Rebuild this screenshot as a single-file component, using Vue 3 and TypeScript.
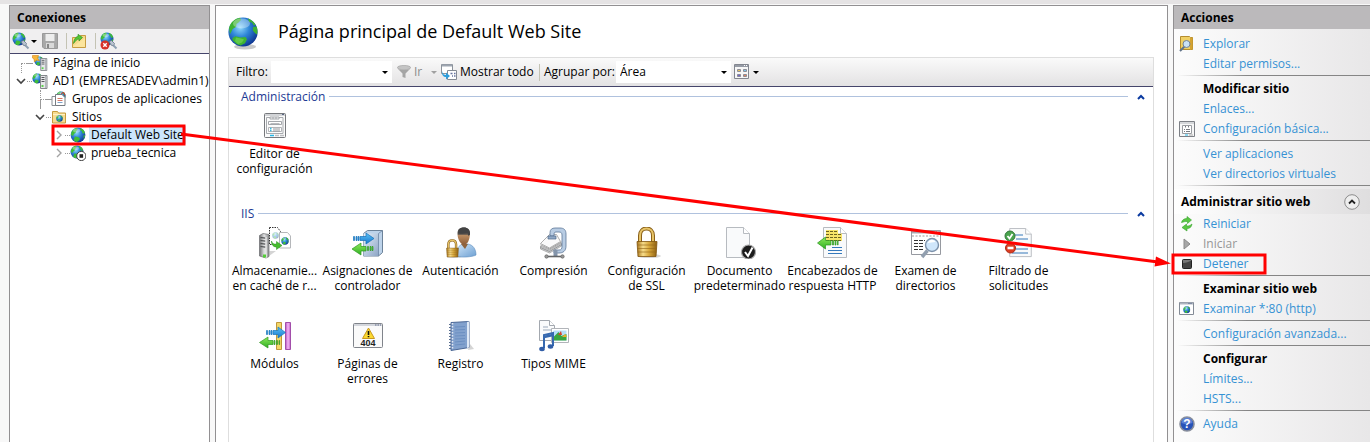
<script setup lang="ts">
import { ref } from 'vue'

interface TreeNode { label: string; icon: string; depth: number; state: 'none' | 'open' | 'closed'; selected?: boolean; cls?: string }
interface Feature { icon: string; lines: string[] }
interface Group { title: string; items: Feature[] }
interface Action { label: string; icon?: string; kind?: 'heading' | 'disabled' }

const tree: TreeNode[] = [
  { label: 'Página de inicio', icon: 'home', depth: 0, state: 'none', cls: 'first' },
  { label: 'AD1 (EMPRESADEV\\admin1)', icon: 'server', depth: 0, state: 'open' },
  { label: 'Grupos de aplicaciones', icon: 'pools', depth: 1, state: 'none', cls: 'child' },
  { label: 'Sitios', icon: 'sites', depth: 1, state: 'open' },
  { label: 'Default Web Site', icon: 'globe', depth: 2, state: 'closed', selected: true },
  { label: 'prueba_tecnica', icon: 'globe-stopped', depth: 2, state: 'closed' },
]

const groups: Group[] = [
  { title: 'Administración', items: [{ icon: 'editor', lines: ['Editor de', 'configuración'] }] },
  {
    title: 'IIS',
    items: [
      { icon: 'cache', lines: ['Almacenamie...', 'en caché de r...'] },
      { icon: 'handlers', lines: ['Asignaciones de', 'controlador'] },
      { icon: 'auth', lines: ['Autenticación'] },
      { icon: 'compress', lines: ['Compresión'] },
      { icon: 'lock', lines: ['Configuración', 'de SSL'] },
      { icon: 'default-doc', lines: ['Documento', 'predeterminado'] },
      { icon: 'headers', lines: ['Encabezados de', 'respuesta HTTP'] },
      { icon: 'browse', lines: ['Examen de', 'directorios'] },
      { icon: 'filtering', lines: ['Filtrado de', 'solicitudes'] },
      { icon: 'modules', lines: ['Módulos'] },
      { icon: 'errors', lines: ['Páginas de', 'errores'] },
      { icon: 'log', lines: ['Registro'] },
      { icon: 'mime', lines: ['Tipos MIME'] },
    ],
  },
]

const siteActions: Action[][] = [
  [{ label: 'Explorar', icon: 'explore' }, { label: 'Editar permisos...' }],
  [{ label: 'Modificar sitio', kind: 'heading' }, { label: 'Enlaces...' }, { label: 'Configuración básica...', icon: 'settings' }],
  [{ label: 'Ver aplicaciones' }, { label: 'Ver directorios virtuales' }],
]

const manageActions: Action[][] = [
  [{ label: 'Reiniciar', icon: 'restart' }, { label: 'Iniciar', icon: 'play', kind: 'disabled' }, { label: 'Detener', icon: 'stop' }],
  [{ label: 'Examinar sitio web', kind: 'heading' }, { label: 'Examinar *:80 (http)', icon: 'web' }],
  [{ label: 'Configuración avanzada...' }],
  [{ label: 'Configurar', kind: 'heading' }, { label: 'Límites...' }, { label: 'HSTS...' }],
  [{ label: 'Ayuda', icon: 'help' }],
]

const filter = ref('')
const groupBy = ref('Área')
</script>

<template>
  <svg class="defs" aria-hidden="true">
    <defs>
      <radialGradient id="gSea" cx=".4" cy=".35" r=".7"><stop offset="0" stop-color="#8fd8fb" /><stop offset=".45" stop-color="#2f86d8" /><stop offset="1" stop-color="#0b2f8c" /></radialGradient>
      <linearGradient id="gGold" x1="0" x2="1" y1="0" y2="0"><stop offset="0" stop-color="#a8741a" /><stop offset=".3" stop-color="#f6dc8a" /><stop offset=".6" stop-color="#d9a93c" /><stop offset="1" stop-color="#8d5f12" /></linearGradient>
      <linearGradient id="gBlue" x1="0" x2="0" y1="0" y2="1"><stop offset="0" stop-color="#5cc3f5" /><stop offset="1" stop-color="#1676cf" /></linearGradient>
      <linearGradient id="gGreen" x1="0" x2="0" y1="0" y2="1"><stop offset="0" stop-color="#8eea5c" /><stop offset="1" stop-color="#2fae22" /></linearGradient>
      <linearGradient id="gSteel" x1="0" x2="1" y1="0" y2="1"><stop offset="0" stop-color="#e6f0fa" /><stop offset="1" stop-color="#8ca4c4" /></linearGradient>
      <linearGradient id="gGray" x1="0" x2="1" y1="0" y2="0"><stop offset="0" stop-color="#6f7072" /><stop offset=".5" stop-color="#e2e3e4" /><stop offset="1" stop-color="#8b8c8e" /></linearGradient>
      <linearGradient id="gPink" x1="0" x2="1" y1="0" y2="0"><stop offset="0" stop-color="#b452bd" /><stop offset=".5" stop-color="#f3b4f5" /><stop offset="1" stop-color="#c264ca" /></linearGradient>
      <linearGradient id="gShirt" x1="0" x2="1" y1="0" y2="1"><stop offset="0" stop-color="#d3e8fa" /><stop offset="1" stop-color="#6c9fd2" /></linearGradient>
      <linearGradient id="gHair" x1="0" x2="0" y1="0" y2="1"><stop offset="0" stop-color="#403f3f" /><stop offset=".4" stop-color="#5b554f" /><stop offset=".45" stop-color="#bd8e62" /><stop offset="1" stop-color="#8c5c36" /></linearGradient>
    </defs>

    <symbol id="globe" viewBox="0 0 16 16">
      <circle cx="8" cy="8" r="7.4" fill="url(#gSea)" />
      <path d="M1.2 6C2 3 4.4 1 7 .9l.7 1.6-1.5 1.4-.3 1.7-2 1.5-.8 1.8L1 8zM10.4 1.2c2 .6 3.6 2 4.4 4l-.6 1.6-1.8-.5-.5-2.2-1.7-.8zM5 9.6l3 .5 2 1.5-1 2-2.2 1.5c-1.5-.3-2.5-1-3.3-1.8zM13.5 8.500l1.6-.2c-.1 1.4-.7 2.600-1.5 3.600z" fill="#3fbd38" />
      <ellipse cx="6.6" cy="3.6" rx="3.6" ry="2" fill="#fff" opacity=".35" />
    </symbol>
    <symbol id="big-globe" viewBox="0 0 32 33">
      <ellipse cx="17" cy="29.700" rx="11" ry="2.800" fill="#777" opacity=".4" />
      <circle cx="15" cy="15" r="14.600" fill="url(#gSea)" />
      <path d="M1 11C2.600 5 7 1.500 12 .7l1 2.200-3 3-1.500.8-.3 3-3.600 2.400-1.700 3.400L2 17zM20 1.500c3 1 6 3.500 7.600 6l-1.800 1.200-1.600-3-3.200-1zM25 10l3.600-.6c1.200 3 1 6 .3 8l-2-1.500-2-2.500zM4.500 21l3-1.800 5 1.300 5-.5 1.500 2.200-2 4-4.400 2.300C9 28 6.500 25.500 4.500 23z" fill="#3eb332" />
      <path d="M8 20.500l5 1 3 1-2 3-4 1.500-3-3z" fill="#7bd95a" opacity=".6" />
      <ellipse cx="13.500" cy="6.500" rx="8.500" ry="5" fill="#fff" opacity=".33" />
    </symbol>
    <symbol id="globe-stopped" viewBox="0 0 16 16">
      <use href="#globe" width="14" height="14" />
      <circle cx="11.300" cy="11" r="4.600" fill="#fff" stroke="#444" />
      <rect x="9.500" y="9.200" width="3.600" height="3.600" fill="#222" />
    </symbol>
    <symbol id="tower" viewBox="0 0 8 14">
      <path d="M.5.500h6.500v13H.5z" fill="#e7e8ea" stroke="#85888c" /><path d="M5 1h1.800v12H5z" fill="#b3b6ba" />
      <path d="M1.500 2.500h3M1.500 4.500h3M1.500 6.500h3" stroke="#56595d" /><path d="M1.500 10h2v2h-2z" fill="#5fd150" />
    </symbol>
    <symbol id="server" viewBox="0 0 16 16"><use href="#globe" x="0" y="0" width="11" height="11" /><use href="#tower" x="8" y="2" width="8" height="14" /></symbol>
    <symbol id="home" viewBox="0 0 16 16">
      <use href="#globe" x="2" y="1" width="10" height="10" /><use href="#tower" x="8" y="3" width="8" height="13" />
      <path d="M.5.500h6l-1 2.500 2 3-3-1-2 2L2 4 .5 3z" fill="#f8b53c" stroke="#d88718" stroke-width=".6" />
    </symbol>
    <symbol id="pools" viewBox="0 0 16 16">
      <use href="#globe" x="5" y="0" width="10" height="10" />
      <path d="M1 5.500h7v9H1z" fill="#fff" stroke="#8a8f95" /><path d="M4.500 3.500h6.500l3 3v8H4.500z" fill="#fff" stroke="#777c82" />
      <path d="M6.500 7.500h5M6.500 9.500h5" stroke="#d67764" /><path d="M6.500 11.500h5" stroke="#7ea2c8" /><path d="M10 2.500l3-1 1 3" fill="none" stroke="#d13c30" />
    </symbol>
    <symbol id="sites" viewBox="0 0 16 16"><path d="M1.500 2.500h5l1 1.500h7v10h-13z" fill="#f6dc91" stroke="#c79b3c" /><path d="M2 5.500h12" stroke="#fff2c4" /><use href="#globe" x="5" y="6" width="7" height="7" /></symbol>
    <symbol id="plug-globe" viewBox="0 0 18 18"><use href="#globe" width="14" height="14" /><path d="M9 9.500l2.500-1 3 3-1 2.500-2.500-1z" fill="#b9c3cf" stroke="#64758a" stroke-width=".8" /><path d="M13.500 13.500L16.500 16.500" stroke="#8fa0b2" stroke-width="2" /></symbol>
    <symbol id="disconnect" viewBox="0 0 18 18"><use href="#plug-globe" width="18" height="18" /><circle cx="5" cy="13" r="4.500" fill="#d6312a" /><path d="M3.300 11.300l3.400 3.400M6.700 11.300l-3.400 3.400" stroke="#fff" stroke-width="1.400" /></symbol>
    <symbol id="save" viewBox="0 0 16 16"><path d="M.5.500h15v15H2l-1.500-1.500z" fill="#a8a8a8" stroke="#9a9a9a" /><path d="M3.500 1h9v7h-9z" fill="#ededed" /><path d="M4 10h8v5H4z" fill="#d9d9d9" /><path d="M5 11h2v4H5z" fill="#888" /></symbol>
    <symbol id="up-folder" viewBox="0 0 16 16"><path d="M1.500 4.500h7l1-2h5v12h-13z" fill="#f4d987" stroke="#c69c42" /><path d="M2 13L14 5v9H2z" fill="#ffe9a6" opacity=".7" /><path d="M2.500 10.500C3 6 5 3.500 7 3.500V1.300L11.500 4.500 8 8V6C6 6 4.500 8 2.500 10.500z" fill="#54c536" stroke="#2c8c1c" stroke-width=".6" /></symbol>

    <symbol id="funnel" viewBox="0 0 14 14"><ellipse cx="7" cy="2.600" rx="6.600" ry="2.200" fill="#c4c4c4" stroke="#999" stroke-width=".6" /><path d="M.5 3.500C3 5.500 11 5.500 13.500 3.500L8.500 8.500v4.500L5.500 12V8.500z" fill="#a5a5a5" /></symbol>
    <symbol id="show-all" viewBox="0 0 16 16"><path d="M.5.500h11v9H.5z" fill="#fff" stroke="#8b929b" /><path d="M1 1.500h10" stroke="#9ea6b1" stroke-width="2" /><path d="M6.500 6.500h9v9h-9z" fill="#fff" stroke="#858b94" /><path d="M9.500 9.500h2M13 9.500h1.500M11 12h1M13 12h1.500" stroke="#6875a0" stroke-width="1.300" /><path d="M1 7c.5 3 2 4 4 4V8.500l4 3.500-4 3.500V13C2.500 13 .5 11 1 7z" fill="#2d9ddb" /></symbol>
    <symbol id="views" viewBox="0 0 16 16"><path d="M.5.500h14v14H.5z" fill="#f7f7f7" stroke="#82868f" /><path d="M1 2h13" stroke="#969ba5" stroke-width="2" /><path d="M10 1.500h3" stroke="#fff" stroke-dasharray="1 1" /><g stroke="#8c8c96"><path d="M3.500 5.500h3v2h-3z" fill="#e8c45a" /><path d="M9.500 5.500h3v2h-3z" fill="#79c2e8" /><path d="M3.500 10.500h3v2h-3z" fill="#7265ca" /><path d="M9.500 10.500h3v2h-3z" fill="#df8660" /></g></symbol>

    <symbol id="editor" viewBox="0 0 32 32">
      <rect x="5.500" y="3.500" width="21" height="24" rx="1" fill="#fbfbfb" stroke="#77797d" /><path d="M6 5h20" stroke="#d2d4d7" stroke-width="2" /><path d="M23 4.500h2" stroke="#5a6785" />
      <path d="M7.500 7.500h5M20 7.500h4v16H7.500v-16" fill="none" stroke="#a7aaae" /><path d="M11 7h9v2h-9zM14 7v2M17 7v2" fill="#fff" stroke="#a4a7ab" />
      <path d="M9.500 11.500h13v3h-13z" fill="#fff" stroke="#a4a7ab" /><path d="M11.500 13.500h9" stroke="#b9bbbe" /><path d="M9.500 17.500h13v4h-13z" fill="#fff" stroke="#b3b5b8" />
      <path d="M11 18.500h1.500M11 20.500h1.500" stroke="#35b8e0" stroke-width="1.400" /><path d="M14 19h7M14 21h7" stroke="#94979b" /><path d="M11 25.500h4" stroke="#25b7e6" stroke-width="1.500" /><path d="M16 25.500h4M21 25.500h4" stroke="#bcbec1" stroke-width="1.500" />
    </symbol>
    <symbol id="cache" viewBox="0 0 32 32">
      <path d="M.5 8.500L4 6.500l6 1v22L7 31l-6.500-2z" fill="url(#gGray)" stroke="#6b6d70" stroke-width=".7" /><path d="M1.500 10.500l5 .7M1.500 13.500l5 .7M1.500 16.500l5 .7M1.500 19.500l5 .7" stroke="#4d4f52" stroke-width="1.200" /><path d="M7 10v21" stroke="#fafafa" /><path d="M4 27.500h3v3H4z" fill="#53cf37" /><path d="M10 24h7l-7 5z" fill="#aaa" opacity=".5" />
      <path d="M10.500.500h8l3 4v13h-11z" fill="#fff" stroke="#333" stroke-dasharray="1.500 1" /><use href="#globe" x="13" y="5" width="7" height="7" opacity=".4" />
      <path d="M20.500 5.500h8l3 3.500v12h-11z" fill="#fff" stroke="#b5b7ba" /><use href="#globe" x="22" y="10" width="8" height="8" />
      <path d="M12.500 14c1 3 2.500 3.200 5 3v-2.500l5.500 4-5.500 4v-2.500c-3 0-5-2-5-6z" fill="#47bd2e" stroke="#238a18" stroke-width=".5" />
    </symbol>
    <symbol id="handlers" viewBox="0 0 32 32">
      <path d="M11.500 6.500l4-3h15v22l-4 3.500h-15z" fill="#bdd3ea" stroke="#6c8299" /><path d="M11.500 6.500h15V29h-15z" fill="url(#gSteel)" /><path d="M26.500 6.500l4-3M26.500 6.500V29" stroke="#6d87a4" stroke-width=".8" />
      <path d="M8 9.500h6V6l8 5.500L14 17v-3.500H8zM1.500 9.500h1v4h-1zM4 9.500h1v4H4zM6 9.500h1v4H6z" fill="url(#gBlue)" stroke="#1570b7" stroke-width=".7" />
      <path d="M14 19.500H9V16l-9 6 9 6v-4h5zM15.500 19.500h1v4h-1zM18 19.500h1v4h-1zM20 19.500h1v4h-1z" fill="url(#gGreen)" stroke="#2d991f" stroke-width=".7" />
    </symbol>
    <symbol id="lock" viewBox="0 0 32 32">
      <ellipse cx="18" cy="29" rx="12" ry="2" fill="#777" opacity=".3" /><path d="M9 15V8.500C9 4 12 1.500 15.500 1.500S22 4 22 8.500V15" fill="none" stroke="#8a611a" stroke-width="4" /><path d="M9 15V8.500C9 4 12 1.500 15.500 1.500S22 4 22 8.500V15" fill="none" stroke="#e7c468" stroke-width="2" />
      <path d="M6 14.500h20l-1 15H7z" fill="url(#gGold)" stroke="#80540f" stroke-width=".8" /><path d="M6.500 18h19M6.500 21.500h19M6.500 25h19" stroke="#946818" stroke-width=".9" opacity=".7" />
    </symbol>
    <symbol id="auth" viewBox="0 0 32 32">
      <path d="M11 29c0-7 3-11 7-12h5c5 1 8 5 8 11-3 2-17 3-20 1z" fill="url(#gShirt)" stroke="#5d8dbe" stroke-width=".6" /><path d="M16 17l4 5 3-5z" fill="#8f643e" /><path d="M12.500 6.500C12.500 2 15 .5 19 .5s6.500 2.500 6 7c-.5 5-2 10-6 10-3.500 0-6.500-5-6.500-11z" fill="url(#gHair)" /><path d="M13 6C14 2 16 .5 19 .5s6 2 6 7l-1.500 1.500-1-3c-3 .8-7 .8-8.500.5z" fill="#434343" />
      <use href="#lock" x="-2" y="12" width="19" height="20" />
    </symbol>
    <symbol id="compress" viewBox="0 0 32 32">
      <path d="M2.500 19l9 4 12-7v3l-12 7-9-4z" fill="#d5d7d9" stroke="#888" stroke-width=".6" /><path d="M2.500 16.500l9-9h7l4 7-11 6.500z" fill="#fafafa" stroke="#9a9a9a" stroke-width=".8" /><path d="M2.500 17.800l9 4.200 12-7M2.500 20.500l9 4 12-7" fill="none" stroke="#777" stroke-width=".7" />
      <path d="M12 9V5.500C12 2.500 14 1 17 1h5c4 0 6 2 6 6v12c0 5-3 7-7 7h-5v-3h5c2.500 0 3-1.500 3-4V8c0-2-1-3-3-3h-3c-2 0-2 1-2 4z" fill="#b8cce3" stroke="#5d7798" stroke-width=".8" /><path d="M10 9h8v3h-8z" fill="#91a9c6" stroke="#4f678a" stroke-width=".7" /><path d="M15.500 23h4v6h-4z" fill="#8495ab" /><path d="M9 29.500h15" stroke="#626467" stroke-width="1.600" /><circle cx="8.500" cy="29.500" r="1.700" fill="#999" stroke="#555" stroke-width=".6" /><circle cx="24.500" cy="29.500" r="1.700" fill="#999" stroke="#555" stroke-width=".6" />
    </symbol>
    <symbol id="page" viewBox="0 0 24 32"><path d="M.5.500h17l6 6v24H.5z" fill="#f9fafb" stroke="#b7bbc0" /><path d="M17.500.500v6h6" fill="#fff" stroke="#b7bbc0" /></symbol>
    <symbol id="default-doc" viewBox="0 0 32 32"><use href="#page" x="2" y="0" width="24" height="32" /><circle cx="24.500" cy="25" r="7" fill="#1c1c1c" stroke="#aaa" stroke-width="1.200" /><path d="M21 25l3 4 4.500-8.500" fill="none" stroke="#fff" stroke-width="2" /></symbol>
    <symbol id="headers" viewBox="0 0 32 32">
      <use href="#page" x="6" y="0" width="24" height="32" /><path d="M9 3h12v3.500h4V14H9z" fill="#f8e468" /><path d="M9 4.500h11M9 7.500h16M9 10.500h16M9 13.500h16" stroke="#6d621f" stroke-dasharray="3 1" /><path d="M15 20.500h10M11 23.500h14M11 26.500h14" stroke="#3579bc" />
      <path d="M14 13.500H8.500V10L.5 16l8 6v-4H14zM15.500 13.500h1v4.500h-1zM18 13.500h1V18h-1zM20.500 13.500h.6V18h-.6z" fill="url(#gGreen)" stroke="#2b981f" stroke-width=".7" />
    </symbol>
    <symbol id="browse" viewBox="0 0 32 32">
      <path d="M1.500 3.500h29v24h-29z" fill="#fff" stroke="#9699a0" /><path d="M2 5h28" stroke="#a8abb2" stroke-width="3" /><path d="M22 5h7" stroke="#fff" stroke-dasharray="1.500 1" /><path d="M2 9h28" stroke="#999" stroke-dasharray="2 1.500" />
      <path d="M4 13.500h11M4 16.500h9M4 19.500h9M4 22.500h10" stroke="#333" stroke-dasharray="4 1" /><path d="M17.500 23.500L12 30" stroke="#929faf" stroke-width="3.500" /><circle cx="22" cy="18" r="6.500" fill="#cfe6fb" stroke="#7c91aa" stroke-width="1.400" /><path d="M17.500 16c2-4 6-4.500 8-1-3 0-5 1-8 1z" fill="#fff" />
    </symbol>
    <symbol id="filtering" viewBox="0 0 32 32">
      <use href="#page" x="6" y="1" width="23" height="30" /><path d="M12 8h8M13 12h12M13 18h12M13 22h12M9 26h16" stroke="#3779ba" stroke-width="1.200" /><circle cx="7" cy="9" r="5" fill="#4aa44e" stroke="#32783a" /><path d="M4.500 9l2 2.500L9.500 7" fill="none" stroke="#fff" stroke-width="1.800" /><circle cx="7.500" cy="21" r="5" fill="#dc3c20" stroke="#aa2816" /><path d="M4.500 21h6" stroke="#fff" stroke-width="2.600" />
    </symbol>
    <symbol id="modules" viewBox="0 0 32 32">
      <path d="M17.500 2.500h5v27h-5z" fill="#f3d768" stroke="#c0973a" /><path d="M26.500 2.500h5v27h-5z" fill="url(#gPink)" stroke="#a24eaa" />
      <path d="M14 10.500h5V7l7.500 5.500L19 18v-3.500h-5zM7.500 10.500h1v4h-1zM10 10.500h1v4h-1zM12 10.500h1v4h-1z" fill="url(#gBlue)" stroke="#1a76bc" stroke-width=".7" /><path d="M14 20.500H9V17l-8.500 5.500L9 28v-3.500h5zM15 20.500h1v4h-1zM17.500 20.500h1v4h-1zM20 20.500h.6v4H20z" fill="url(#gGreen)" stroke="#309a24" stroke-width=".7" />
    </symbol>
    <symbol id="errors" viewBox="0 0 32 32">
      <rect x="1.500" y="3.500" width="29" height="24" rx="1" fill="#fafafa" stroke="#80848b" /><path d="M2 5h28" stroke="#d3d6dc" stroke-width="2" /><path d="M23 5h6" stroke="#616d8d" stroke-dasharray="1.500 1" /><path d="M16.500 8l6 10.500h-12z" fill="#fbd92f" stroke="#c9971c" stroke-linejoin="round" /><path d="M16.500 11v4M16.500 16v1.300" stroke="#111" stroke-width="1.600" />
    </symbol>
    <symbol id="log" viewBox="0 0 32 32">
      <path d="M25 24l4 5-6 1z" fill="#aaa" opacity=".5" /><path d="M6 2.500l18-1v26l-18 3z" fill="#82a1cd" stroke="#4b6795" /><path d="M22 2v26l2-.5v-26z" fill="#dfe9f6" /><path d="M10 7l10-.5M10 10l10-.5M10 13l10-.5M10 16l10-.5M10 19l10-.5M10 22l10-1M10 25l10-1" stroke="#6286bb" stroke-width=".7" /><path d="M7.500 3v27" stroke="#e5eaf3" stroke-width="1.500" stroke-dasharray="1.500 1.500" /><path d="M5 4v26" stroke="#596f91" stroke-width="2" stroke-dasharray="1 2" />
    </symbol>
    <symbol id="mime" viewBox="0 0 32 32">
      <path d="M1.500.500h10l5 5v15h-15z" fill="#fafbfc" stroke="#a3a8af" /><path d="M11.500.500v5h5" fill="#fff" stroke="#a3a8af" /><path d="M5 7h5M5 10h9" stroke="#9ba9bb" /><path d="M13.500 8.500h17v14h-17z" fill="#fff" stroke="#b1b4b9" /><path d="M15.500 10.500h13v10h-13z" fill="#b6defa" /><path d="M15.500 17l5-5 3 4 5-2v6.500h-13z" fill="#3aa640" /><path d="M20 15l3-4 1 4z" fill="#d6442b" /><path d="M24 17l3-3 2 3z" fill="#e6af2d" />
      <path d="M6 28V15l9-2v13" fill="none" stroke="#3669b0" stroke-width="2" /><path d="M6 17l9-2" stroke="#3669b0" stroke-width="2.500" /><ellipse cx="4" cy="29" rx="2.800" ry="2.200" fill="#315ea7" /><ellipse cx="12.500" cy="26.500" rx="2.800" ry="2.200" fill="#315ea7" />
    </symbol>

    <symbol id="explore" viewBox="0 0 16 16"><path d="M1.500.500h9l1 1h2v12h-12z" fill="#f0d064" stroke="#b58d2f" /><path d="M11 2v12l2.500-1V1.500z" fill="#d4a332" /><path d="M6 10l-5 5" stroke="#60738a" stroke-width="2" /><circle cx="7.500" cy="8" r="3.500" fill="#c9e2f6" stroke="#708197" /></symbol>
    <symbol id="settings" viewBox="0 0 16 16"><path d="M.5.500h15v15H.5z" fill="#f7f7f7" stroke="#7d8086" /><path d="M1 2h14" stroke="#d5d7da" stroke-width="2" /><path d="M3.500 4.500h9v8h-9z" fill="#fff" stroke="#999ca1" /><path d="M6.500 5v1.500M9.500 5v1.500M7 8.500h4M7 10.500h4M5 8.500h1M5 10.500h1" stroke="#777a80" /><path d="M6 14h3" stroke="#28b7e6" /><path d="M10 14h4" stroke="#aaa" /></symbol>
    <symbol id="restart" viewBox="0 0 16 16"><path d="M2.500 6.500C3 4 5 2.500 8 2.500V.5L12.500 4 8.500 7.500V5.500C6 5.300 4.500 6 2.500 6.500zM13 8c-.5 3-2 4.500-5 4.500v2.500L3 11.500 7.500 8v2C10 10.200 11 9.500 13 8z" fill="#5bc845" stroke="#37a32c" stroke-width=".6" /></symbol>
    <symbol id="play" viewBox="0 0 16 16"><path d="M5 3l6 5-6 5z" fill="#a7a7a7" stroke="#8b8b8b" /></symbol>
    <symbol id="stop" viewBox="0 0 16 16"><rect x="3.500" y="3.500" width="9" height="9" rx="1" fill="#444" stroke="#222" /><path d="M4 7c3-.4 6-1 8-2.500V4H4z" fill="#777" /></symbol>
    <symbol id="web" viewBox="0 0 16 16"><path d="M.5 1.500h14v12H.5z" fill="#fff" stroke="#848b96" /><path d="M1 2.500h13" stroke="#aeb5c0" stroke-width="2" /><path d="M9.500 2.500h4" stroke="#4f6189" stroke-dasharray="1 1" /><use href="#globe" x="4" y="5" width="7.500" height="7.500" /></symbol>
    <symbol id="help" viewBox="0 0 16 16"><circle cx="8" cy="8" r="7" fill="#2853b8" stroke="#888e9b" stroke-width="1.600" /><path d="M2.500 7a5.500 5.500 0 0 1 11 0C10 8.500 6 8.500 2.500 7z" fill="#7c9ee6" opacity=".6" /></symbol>
  </svg>

  <div class="window">
    <aside class="panel connections">
      <h2 class="panel-head">Conexiones</h2>
      <div class="mini-bar">
        <button class="tool connect" aria-label="Conectar"><svg class="i18"><use href="#plug-globe" /></svg><i class="down" /></button>
        <button class="tool" aria-label="Guardar" disabled><svg class="i16"><use href="#save" /></svg></button>
        <span class="vsep" />
        <button class="tool" aria-label="Subir"><svg class="i16"><use href="#up-folder" /></svg></button>
        <span class="vsep" />
        <button class="tool" aria-label="Desconectar"><svg class="i18"><use href="#disconnect" /></svg></button>
      </div>
      <ul class="tree">
        <li v-for="n in tree" :key="n.label" :class="['node', 'd' + n.depth, n.cls]">
          <span class="twist">
            <svg v-if="n.state === 'open'" viewBox="0 0 10 10"><path d="M1 3l4 4 4-4" fill="none" stroke="#444" stroke-width="1.600" /></svg>
            <svg v-else-if="n.state === 'closed'" viewBox="0 0 10 10"><path d="M3 1l4 4-4 4" fill="none" stroke="#a3a3a3" stroke-width="1.400" /></svg>
          </span>
          <span class="dots" />
          <svg class="i16"><use :href="'#' + n.icon" /></svg>
          <button :class="['node-label', { selected: n.selected }]">{{ n.label }}</button>
        </li>
      </ul>
    </aside>

    <main class="panel content">
      <header class="title">
        <svg class="title-icon"><use href="#big-globe" /></svg>
        <h1>Página principal de Default Web Site</h1>
      </header>
      <div class="frame">
        <div class="toolbar">
          <label for="filter" class="filter-label">Filtro:</label>
          <span class="combo"><input id="filter" v-model="filter" type="text"><i class="down" /></span>
          <button class="tool go" disabled><svg class="i14"><use href="#funnel" /></svg>Ir<i class="down" /></button>
          <button class="tool show"><svg class="i16"><use href="#show-all" /></svg>Mostrar todo</button>
          <span class="vsep" />
          <label for="group" class="group-label">Agrupar por:</label>
          <span class="combo area"><select id="group" v-model="groupBy"><option>Área</option><option>Categoría</option></select><i class="down" /></span>
          <button class="tool" aria-label="Vista"><svg class="i16"><use href="#views" /></svg><i class="down" /></button>
        </div>
        <section v-for="g in groups" :key="g.title" class="group">
          <div class="group-head">
            <h3>{{ g.title }}</h3><span class="rule" />
            <button class="tool" :aria-label="'Contraer ' + g.title"><svg class="caret" viewBox="0 0 8 6"><path d="M1 5l3-3 3 3" fill="none" stroke="#0a3aa0" stroke-width="2" /></svg></button>
          </div>
          <div class="grid">
            <button v-for="f in g.items" :key="f.icon" class="feature">
              <svg class="i32" viewBox="0 0 32 32"><use :href="'#' + f.icon" width="32" height="32" /><text v-if="f.icon === 'errors'" x="16" y="26" text-anchor="middle" class="icon-404">404</text></svg>
              <span v-for="l in f.lines" :key="l" class="line">{{ l }}</span>
            </button>
          </div>
        </section>
      </div>
    </main>

    <aside class="panel actions">
      <h2 class="panel-head">Acciones</h2>
      <nav class="list top">
        <ul v-for="(b, i) in siteActions" :key="i">
          <li v-for="a in b" :key="a.label">
            <span class="slot"><svg v-if="a.icon" class="i16"><use :href="'#' + a.icon" /></svg></span>
            <strong v-if="a.kind === 'heading'">{{ a.label }}</strong>
            <a v-else href="#">{{ a.label }}</a>
          </li>
        </ul>
      </nav>
      <div class="section-head">
        <h3>Administrar sitio web</h3>
        <button class="round" aria-label="Contraer"><svg viewBox="0 0 16 16"><circle cx="8" cy="8" r="7.300" fill="#eee" stroke="#8b8b8b" /><path d="M5 9.500l3-3 3 3" fill="none" stroke="#222" stroke-width="1.800" /></svg></button>
      </div>
      <nav class="list">
        <ul v-for="(b, i) in manageActions" :key="i">
          <li v-for="a in b" :key="a.label">
            <span class="slot"><svg v-if="a.icon" class="i16" viewBox="0 0 16 16"><use :href="'#' + a.icon" width="16" height="16" /><text v-if="a.icon === 'help'" x="8" y="12" text-anchor="middle" class="icon-q">?</text></svg></span>
            <strong v-if="a.kind === 'heading'">{{ a.label }}</strong>
            <button v-else-if="a.kind === 'disabled'" class="off" disabled>{{ a.label }}</button>
            <a v-else href="#">{{ a.label }}</a>
          </li>
        </ul>
      </nav>
    </aside>

    <svg class="marks" viewBox="0 0 1370 442" aria-hidden="true">
      <rect x="53" y="126" width="131" height="18" fill="none" stroke="#f00" stroke-width="3" />
      <rect x="1173" y="255" width="92" height="18" fill="none" stroke="#f00" stroke-width="3" />
      <path d="M181 134L1158 262" stroke="#f00" stroke-width="3" />
      <path d="M1171 263.500L1154.500 266.500L1156 256.500z" fill="#f00" />
    </svg>
  </div>
</template>

<style>
body { overflow: hidden; }
</style>

<style scoped>
* { box-sizing: border-box; margin: 0; padding: 0; }
.defs { position: absolute; width: 0; height: 0; }
.icon-404 { font: bold 9px "Liberation Sans", sans-serif; fill: #222; }
.icon-q { font: bold 12px "Liberation Sans", sans-serif; fill: #fff; }
.window {
  position: relative; display: flex; gap: 5px; height: 100vh; padding: 5px 0 0 9px; overflow: hidden;
  font: 12px/18px "Open Sans", "Noto Sans", sans-serif; color: #000;
  background: linear-gradient(#e5e3e4 4px, #f8f8f8 4px);
}
button { font: inherit; color: inherit; background: none; border: 0; }
ul { list-style: none; }
svg { display: block; flex: none; }
.i14 { width: 14px; height: 14px; }
.i16 { width: 16px; height: 16px; }
.i18 { width: 18px; height: 18px; }
.i32 { width: 32px; height: 32px; }
.panel { border: 1px solid #929092; border-bottom: 0; background: #fff; }
.panel-head { height: 23px; padding-left: 7px; font-size: 12px; line-height: 23px; background: #bbb9bb; }
.down { width: 0; height: 0; flex: none; border: 3px solid transparent; border-top-color: #000; border-bottom: 0; }
.tool { display: flex; align-items: center; }
.vsep { width: 1px; height: 16px; background: #c4c3b4; }

.connections { flex: none; width: 201px; }
.mini-bar { display: flex; align-items: center; gap: 4px; height: 25px; padding-left: 2px; background: #f0eff0; border-bottom: 1px solid #45456b; }
.mini-bar .tool { gap: 1px; margin-right: 4px; }
.mini-bar .connect { margin-right: 1px; }
.node { position: relative; display: flex; align-items: center; height: 18px; }
.d0 { padding-left: 5px; }
.d1 { padding-left: 24px; }
.d2 { padding-left: 43px; }
.twist { flex: none; width: 12px; display: flex; justify-content: center; }
.twist svg { width: 10px; height: 10px; }
.dots { flex: none; width: 5px; border-top: 1px dotted #999; }
.first::before, .child::before { content: ""; position: absolute; top: 9px; width: 11px; height: 9px; border: 1px dotted #999; border-width: 1px 0 0 1px; }
.first::before { left: 11px; }
.child::before { left: 30px; }
.child::after { content: ""; position: absolute; top: 0; left: 30px; height: 18px; border-left: 1px dotted #999; }
.node-label { height: 18px; margin-left: 3px; padding: 0 2px; white-space: nowrap; line-height: 18px; }
.node-label.selected { background: #cce6fc; }

.content { flex: 1; min-width: 0; display: flex; flex-direction: column; }
.title { display: flex; align-items: flex-start; gap: 18px; height: 51px; padding: 11px 0 0 12px; }
.title-icon { width: 32px; height: 33px; }
h1 { font-size: 18px; font-weight: 400; line-height: 28px; white-space: nowrap; }
.frame { flex: 1; margin: 0 13px 0 12px; border: 1px solid #dedede; border-bottom: 0; }
.toolbar { display: flex; align-items: center; height: 29px; padding-left: 7px; background: linear-gradient(#fafafa, #e3e2e3); border-bottom: 1px solid #45456b; white-space: nowrap; }
.filter-label { width: 35px; }
.combo { display: flex; align-items: center; width: 121px; height: 22px; padding-right: 4px; background: #fff; }
.combo.area { width: 115px; }
.combo input, .combo select { flex: 1; min-width: 0; height: 22px; padding: 0 4px; border: 0; background: none; font: inherit; appearance: none; outline: 0; }
.go { width: 49px; padding-left: 5px; gap: 3px; color: #8c8c8c; }
.go .down { margin-left: auto; margin-right: 4px; border-top-color: #a0a0a0; }
.show { width: 98px; gap: 3px; }
.toolbar .vsep { margin-right: 4px; height: 17px; }
.group-label { width: 72px; }
.area + .tool { margin-left: 3px; gap: 3px; }
.group-head { display: flex; align-items: center; gap: 4px; height: 19px; padding: 0 3px 0 12px; color: #1c3a94; }
.group-head h3 { font-size: 12px; font-weight: 400; }
.rule { flex: 1; height: 1px; background: #b0c2de; }
.group-head .tool { width: 18px; justify-content: center; }
.caret { width: 8px; height: 6px; }
.grid { display: grid; grid-template-columns: repeat(auto-fill, 93px); grid-auto-rows: 93px; padding-top: 4px; margin: 0 0 1px -1px; }
.feature { display: flex; flex-direction: column; align-items: center; justify-content: flex-start; line-height: 15px; white-space: nowrap; }
.feature .i32 { margin-bottom: 4px; }
.line { display: block; }

.actions { flex: none; width: 197px; border-right: 0; background: linear-gradient(90deg, #fcfcfc, #e8e7e8); }
.list.top { padding-top: 5px; }
.list li { display: flex; align-items: center; height: 20px; padding-left: 5px; white-space: nowrap; }
.list ul { padding-bottom: 5px; background: linear-gradient(90deg, transparent, #858585 70px) 3px calc(100% - 3px) / 100% 1px no-repeat; }
.list:last-child ul:last-child { background: none; }
.slot { width: 24px; }
.list a { color: #3692d4; text-decoration: none; }
.off { color: #969696; }
.section-head { display: flex; align-items: center; justify-content: space-between; height: 25px; padding: 0 10px 0 7px; background: linear-gradient(90deg, #fff, #dfdedf); }
.section-head h3 { font-size: 12px; }
.round svg { width: 16px; height: 16px; }
.marks { position: absolute; left: 0; top: 0; width: 1370px; height: 442px; pointer-events: none; }
</style>
